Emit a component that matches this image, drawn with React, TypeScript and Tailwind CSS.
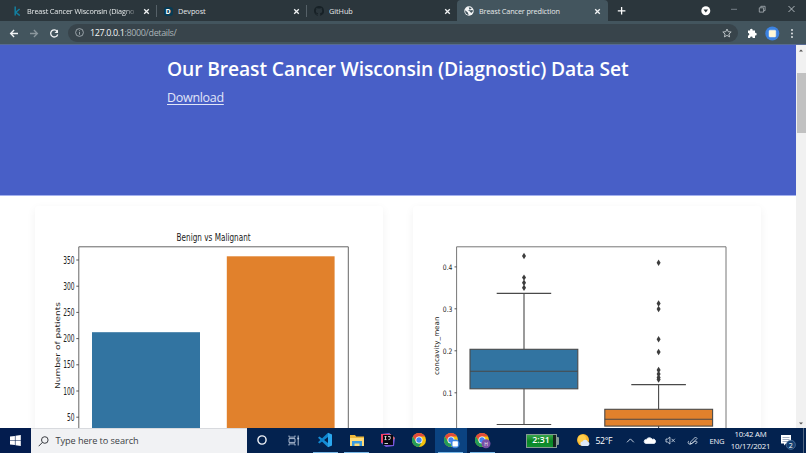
import type { ReactNode } from "react";

const ui = "font-['Open_Sans','Noto_Sans',sans-serif]";

function Close() {
  return (
    <svg width="7" height="7" viewBox="0 0 7 7" className="shrink-0">
      <path d="M1.2 1.2 5.8 5.8M5.8 1.2 1.2 5.8" stroke="#f1f3f4" strokeWidth="1.3" />
    </svg>
  );
}

function Tab({ icon, title, width, titleClass = "" }: { icon: ReactNode; title: string; width: string; titleClass?: string }) {
  return (
    <div className={`flex h-[22px] shrink-0 items-center ${width}`}>
      <div className="flex w-[10px] shrink-0 justify-center">{icon}</div>
      <span className={`ml-[5px] grow overflow-hidden whitespace-nowrap text-[7.3px] leading-[12px] text-[#e6eaeb] ${titleClass}`}>{title}</span>
      <Close />
    </div>
  );
}

function TabStrip() {
  return (
    <div className="flex h-[21px] bg-[#2b363c]">
      <Tab
        width="w-[150px] pl-[12px]"
        title="Breast Cancer Wisconsin (Diagno"
        titleClass="mr-[4px] tracking-[-0.14px] [mask-image:linear-gradient(to_right,black_86%,transparent)]"
        icon={
          <svg width="7" height="10" viewBox="0 0 7 10">
            <path d="M1.2.5v9M5.6 3 1.8 6.3 5.8 9.5" stroke="#137f9f" strokeWidth="1.5" fill="none" />
          </svg>
        }
      />
      <div className="ml-[6px] mt-[5px] h-[12px] w-px bg-[#566168]" />
      <Tab
        width="w-[143px] pl-[6px]"
        title="Devpost"
        titleClass="tracking-[-0.05px]"
        icon={
          <div className="flex size-[9px] items-center justify-center rounded-[3px] bg-[#063b54] text-[7px] font-bold leading-none text-white">D</div>
        }
      />
      <div className="ml-[6px] mt-[5px] h-[12px] w-px bg-[#566168]" />
      <Tab
        width="w-[144px] pl-[7px]"
        title="GitHub"
        titleClass="tracking-[-0.05px]"
        icon={
          <svg width="10" height="10" viewBox="0 0 16 16" fill="#172126">
            <path d="M8 0C3.58 0 0 3.58 0 8c0 3.54 2.29 6.53 5.47 7.59.4.07.55-.17.55-.38v-1.49c-2.01.37-2.53-.49-2.69-.94-.09-.23-.48-.94-.82-1.13-.28-.15-.68-.52-.01-.53.63-.01 1.08.58 1.23.82.72 1.21 1.87.87 2.33.66.07-.52.28-.87.51-1.07-1.78-.2-3.64-.89-3.64-3.95 0-.87.31-1.59.82-2.15-.08-.2-.36-1.02.08-2.12 0 0 .67-.21 2.2.82a7.6 7.6 0 0 1 4 0c1.53-1.04 2.2-.82 2.2-.82.44 1.1.16 1.92.08 2.12.51.56.82 1.27.82 2.15 0 3.07-1.87 3.75-3.65 3.95.29.25.54.73.54 1.48v2.2c0 .21.15.46.55.38A8 8 0 0 0 8 0" />
          </svg>
        }
      />
      <div className="ml-[6px] h-full rounded-t-[4px] bg-[#43555e]">
        <Tab
          width="w-[151px] pl-[7px] pr-[7px]"
          title="Breast Cancer prediction"
          titleClass="tracking-[-0.14px]"
          icon={
            <svg width="10" height="10" viewBox="0 0 10 10">
              <circle cx="5" cy="5" r="4.7" fill="#f4f6f7" />
              <path d="M1.2 4.3 3.8 6.5 4.7 9C2.2 8.8.8 6.9 1.2 4.3ZM4.8 1.3 7.8 2 6.7 3.3 5.4 3.2 4.8 4.4 3.6 4.6 5.7 5.3 7.2 7 8.8 5.4 8.7 4 6.7 4.3 5.6 4.5" fill="#43555e" />
            </svg>
          }
        />
      </div>
      <svg width="198" height="21" viewBox="608 0 198 21" fill="none" className="shrink-0">
        <path d="M617.8 10.8h7.6M621.6 7v7.6" stroke="#fff" strokeWidth="1.3" />
        <circle cx="705.8" cy="10.7" r="4.5" fill="#fff" />
        <path d="m703.5 9.5 2.3 3 2.3-3Z" fill="#2b363c" />
        <path d="M731 9.3h6" stroke="#89939a" strokeWidth=".8" />
        <path d="M759.3 7.8h4.3v4.3h-4.3ZM760.8 7.5V6.3h4.3v4.3h-1.2" stroke="#abb3b8" strokeWidth=".8" />
        <path d="m788.5 6 6 6m0-6-6 6" stroke="#bbc3c7" strokeWidth=".9" />
      </svg>
    </div>
  );
}

function Toolbar() {
  return (
    <div className="flex h-[24px] items-center border-b border-[#576a94] bg-[#43555e]">
      <svg width="68" height="22" viewBox="0 0 68 22" fill="none" strokeWidth="1.3">
        <path d="M18 11.5h-7.4M14.1 8l-3.5 3.5 3.5 3.5" stroke="#f2f4f5" />
        <path d="M30 11.5h7.4M33.9 8l3.5 3.5-3.5 3.5" stroke="#8b979d" />
        <path d="M57.2 9.3A3.6 3.6 0 1 0 57.7 12.5" stroke="#f2f4f5" />
        <path d="M58 7.5v3.5h-3.5Z" fill="#f2f4f5" />
      </svg>
      <div className="flex h-[18px] w-[670px] items-center rounded-full bg-[#38444b] pl-[7px] pr-[6px]">
        <svg width="9" height="9" viewBox="0 0 9 9" fill="none" stroke="#b3bbc0" strokeWidth=".8">
          <circle cx="4.5" cy="4.5" r="3.9" />
          <path d="M4.5 4v2.7M4.5 2.3v.9" />
        </svg>
        <span className="ml-[6px] grow text-[9px] leading-[14px] tracking-[-0.38px] text-[#a9b3b8]"><span className="text-[#f5f7f8]">127.0.0.1</span>:8000/details/</span>
        <svg width="10" height="10" viewBox="0 0 10 10" fill="none" stroke="#c5cccf" strokeWidth=".9">
          <path d="m5 1 1.2 2.7 3 .3-2.3 2 .7 2.9L5 7.4 2.4 8.9l.7-2.9L.8 4l3-.3Z" />
        </svg>
      </div>
      <svg width="68" height="22" viewBox="738 21.5 68 22">
        <path d="M748 30h2.1a1.3 1.3 0 1 1 2.5 0h2.4v2.4a1.3 1.3 0 1 1 0 2.5v2.5h-2.3a1.3 1.3 0 1 0-2.6 0H748v-2.3a1.3 1.3 0 1 0 0-2.6Z" fill="#fff" />
        <circle cx="772.3" cy="33" r="7" fill="#3c82e0" />
        <rect x="769" y="29.7" width="6.8" height="6.8" rx="1" fill="#fff8d6" stroke="#e8eef0" strokeWidth=".5" />
        <g fill="#eef1f2"><circle cx="792" cy="29.5" r=".9" /><circle cx="792" cy="33" r=".9" /><circle cx="792" cy="36.5" r=".9" /></g>
      </svg>
    </div>
  );
}

const bars = [
  [350, 260], [300, 286.2], [250, 312.4], [200, 338.6], [150, 364.8], [100, 391], [50, 417.2],
];
const ticks: [string, number][] = [["0.4", 266.9], ["0.3", 308.8], ["0.2", 350.8], ["0.1", 392.8]];
const outliers: [number, number][] = [
  [524, 256], [524, 277.6], [524, 282.7], [524, 287.7],
  [658.6, 262.7], [658.6, 303.5], [658.6, 309], [658.6, 339.3], [658.6, 352], [658.6, 370], [658.6, 374], [658.6, 377.5], [658.6, 379.5],
];
const chartFont = "font-['DejaVu_Sans',sans-serif]";

function BarChart() {
  return (
    <svg width="348" height="222" viewBox="35 206 348 222" className={chartFont}>
      <rect x="92" y="332.2" width="108" height="100" fill="#3274a1" />
      <rect x="226.8" y="256.3" width="107.8" height="180" fill="#e1812c" />
      <path d="M78.8 430V246.8H348.3V430" fill="none" stroke="#666" strokeWidth="1" />
      <text x="176.6" y="241.4" fontSize="11" fill="#1a1a1a" textLength="74" lengthAdjust="spacingAndGlyphs">Benign vs Malignant</text>
      {bars.map(([v, y]) => (
        <g key={v}>
          <path d={`M76.3 ${y}h2.5`} stroke="#444" strokeWidth=".9" />
          <text x={v >= 100 ? 63.2 : 66.9} y={y + 3.5} fontSize="9.6" fill="#222" textLength={v >= 100 ? 11.4 : 7.6} lengthAdjust="spacingAndGlyphs">{v}</text>
        </g>
      ))}
      <text transform="translate(59.8 389) rotate(-90)" fontSize="6.8" fill="#222" textLength="87" lengthAdjust="spacingAndGlyphs">Number of patients</text>
    </svg>
  );
}

function BoxPlot() {
  return (
    <svg width="348" height="222" viewBox="413 206 348 222" className={chartFont}>
      <path d="M456.6 430V246.8H726V430" fill="none" stroke="#777" strokeWidth="1" />
      {ticks.map(([label, y]) => (
        <g key={label}>
          <path d={`M454.5 ${y}h2.1`} stroke="#444" strokeWidth=".9" />
          <text x="442.8" y={y + 2.7} fontSize="7.5" fill="#222" textLength="9.6" lengthAdjust="spacingAndGlyphs">{label}</text>
        </g>
      ))}
      <text transform="translate(438.9 375) rotate(-90)" fontSize="6.7" fill="#222" textLength="58.5" lengthAdjust="spacingAndGlyphs">concavity_mean</text>
      <g stroke="#494949" strokeWidth="1.1" fill="none">
        <path d="M524 293.4V349.3M524 389V424.5M496.7 293.4h54.5M496.7 424.5h54.5M658.6 384.6V409.3M658.6 426V430M631.3 384.6h54.6" />
        <rect x="470" y="349.3" width="107.8" height="39.5" fill="#3274a1" />
        <path d="M470 371.2h107.8" />
        <rect x="604.8" y="409.3" width="107.8" height="16.8" fill="#e1812c" />
        <path d="M604.8 419.2h107.8" />
      </g>
      {outliers.map(([x, y]) => (
        <path key={`${x}-${y}`} d={`M${x} ${y - 3.2}l2 3.2-2 3.2-2-3.2Z`} fill="#3d3d3d" />
      ))}
    </svg>
  );
}

function Page() {
  return (
    <div className="flex h-[383px] bg-white">
      <main className="flex h-full w-[796px] flex-col overflow-hidden">
        <section className="h-[151px] shrink-0 border-b border-[#a4b1ee] bg-[#485fc7] pl-[167px] pt-[10px]">
          <h1 className="whitespace-nowrap text-[19.3px] font-semibold leading-[28px] tracking-[-0.12px] text-white">Our Breast Cancer Wisconsin (Diagnostic) Data Set</h1>
          <a className="mt-[5px] block w-max text-[12.5px] leading-[19px] tracking-[-0.3px] text-[#e1e6f8] underline underline-offset-2">Download</a>
        </section>
        <section className="flex gap-[30px] pl-[35px] pt-[10px]">
          <div className="h-[260px] w-[348px] shrink-0 rounded-[3px] bg-white shadow-[0_3px_10px_rgba(10,10,10,0.06)]"><BarChart /></div>
          <div className="h-[260px] w-[348px] shrink-0 rounded-[3px] bg-white shadow-[0_3px_10px_rgba(10,10,10,0.06)]"><BoxPlot /></div>
        </section>
      </main>
      <div className="flex w-[10px] flex-col items-center justify-between bg-[#f1f1f1] pb-[3px] pt-[4px]">
        <svg width="4" height="3" viewBox="0 0 4 3"><path d="m0 2.5 2-2 2 2Z" fill="#505050" /></svg>
        <div className="mb-auto mt-[21px] h-[60px] w-[9px] bg-[#c1c1c1]" />
        <svg width="4" height="3" viewBox="0 0 4 3"><path d="m0 .5 2 2 2-2Z" fill="#505050" /></svg>
      </div>
    </div>
  );
}

function Chrome({ badge }: { badge?: ReactNode }) {
  return (
    <svg width="18" height="18" viewBox="0 0 18 18">
      <circle cx="9" cy="9" r="7" fill="#f4c20d" />
      <path d="M2.9 5.5A7 7 0 0 1 15.1 5.5H9A3.5 3.5 0 0 0 6 10.8Z" fill="#e24a3b" />
      <path d="M2.9 5.5 6 10.8A3.5 3.5 0 0 0 12 10.8L9 16A7 7 0 0 1 2.9 5.5Z" fill="#239d58" />
      <circle cx="9" cy="9" r="3.5" fill="#fff" />
      <circle cx="9" cy="9" r="2.7" fill="#4285f4" />
      {badge}
    </svg>
  );
}

function Slot({ children, className = "", line = false }: { children: ReactNode; className?: string; line?: boolean }) {
  return (
    <div className={`flex h-full w-[31.45px] shrink-0 flex-col items-center ${className}`}>
      <div className="flex h-[24px] items-center">{children}</div>
      {line && <div className="h-px w-[25px] bg-[#78b8e8]" />}
    </div>
  );
}

function Taskbar() {
  return (
    <div className="flex h-[25px] items-center bg-[#03224f]">
      <div className="flex h-full w-[30.5px] items-center justify-center bg-[#031c4e]">
        <svg width="11" height="11" viewBox="0 0 11 11" fill="#fff">
          <path d="m0 1.6 4.9-.7v4.3H0ZM5.5.8 10.8 0v5.2H5.5ZM0 5.8h4.9v4.3L0 9.4ZM5.5 5.8h5.3V11l-5.3-.8Z" />
        </svg>
      </div>
      <div className="flex h-full w-[216px] items-center border-t border-[#d8dade] bg-[#f1f2f4] pl-[7px]">
        <svg width="11" height="11" viewBox="0 0 11 11" fill="none" stroke="#3a3d42" strokeWidth="1">
          <circle cx="6.8" cy="4" r="3.3" /><path d="M4.4 6.4.7 10.2" />
        </svg>
        <span className="ml-[7px] text-[9.2px] leading-[14px] tracking-[-0.08px] text-[#3c3f44]">Type here to search</span>
      </div>
      <Slot><svg width="10" height="10" viewBox="0 0 10 10"><circle cx="5" cy="5" r="4.1" fill="none" stroke="#f0f3f8" strokeWidth="1.4" /></svg></Slot>
      <Slot>
        <svg width="12" height="11" viewBox="0 0 12 11" fill="none" stroke="#bcc9dc" strokeWidth=".9">
          <path d="M1 .5v1.6h6V.5M1 10.5V8.9h6v1.6M1 3.6h6v3.8H1ZM10.2.5v10" /><path d="M9.3 3.5h1.8" strokeWidth="1.6" />
        </svg>
      </Slot>
      <Slot line>
        <svg width="16" height="16" viewBox="0 0 16 16">
          <path d="M1 5.7 2.5 4.4 11 11v4.2Z" fill="#168dd6" />
          <path d="M11 .8 15 2.5v11l-4 1.7Z" fill="#2ba8ee" />
          <path d="m1 10.3 10-9.5V5L2.5 11.6Z" fill="#0f86cf" />
        </svg>
      </Slot>
      <Slot line>
        <svg width="14" height="13" viewBox="0 0 14 13">
          <path d="M0 1h5l1.2 1.5H14V12H0Z" fill="#f0b93b" /><path d="M0 4h14v8H0Z" fill="#ffdc78" />
          <path d="M2 7h10v5H9.5V9.5h-5V12H2Z" fill="#3a9be0" />
        </svg>
      </Slot>
      <Slot>
        <svg width="14" height="14" viewBox="0 0 14 14">
          <path d="M0 1 8 0l6 5-1 8-8 1L0 10Z" fill="#7556d6" /><path d="M0 1h8L3 9 0 10Z" fill="#f23e65" /><path d="m8 0 6 5-3 3Z" fill="#db6b68" />
          <rect x="2" y="2" width="10" height="10" fill="#080810" />
          <path d="M3.5 3.6h2M4.5 3.6v3M3.5 6.6h2M7 3.6h2.2v2.2q0 .9-1.8.8" stroke="#fff" strokeWidth=".8" fill="none" /><path d="M3.5 10.5h3.5" stroke="#fff" strokeWidth=".8" />
        </svg>
      </Slot>
      <Slot><Chrome /></Slot>
      <Slot className="bg-[#0b4381]" line>
        <Chrome badge={<g><circle cx="13.2" cy="12.8" r="4.4" fill="#3b83df" /><rect x="10.5" y="10.2" width="5.4" height="5.2" rx=".7" fill="#fff" /></g>} />
      </Slot>
      <Slot line>
        <Chrome badge={<g><circle cx="13" cy="12.8" r="4.5" fill="#7950a5" /><text x="11.3" y="14.6" fontSize="5" fill="#eee">H</text></g>} />
      </Slot>
      <div className="ml-[28px] flex h-[14px] w-[31px] shrink-0 items-center justify-center border border-[#859a93] bg-linear-to-b from-[#36a64b] via-[#078625] to-[#118f31] pr-[1px] text-[8.8px] font-semibold leading-none text-white shadow-[inset_-3px_0_0_#17251e]">2:31</div>
      <div className="h-[8px] w-[2px] rounded-r-[1px] bg-[#859a93]" />
      <svg width="15" height="15" viewBox="0 0 15 15" className="ml-[17px] shrink-0">
        <circle cx="7" cy="7" r="6" fill="#f9b82e" /><circle cx="6" cy="6" r="4" fill="#ffce4b" />
        <path d="M6 13a2.3 2.3 0 0 1 .4-4.5 3 3 0 0 1 5.5.3A2.2 2.2 0 0 1 12 13Z" fill="#dce8f7" />
      </svg>
      <span className="ml-[4.5px] w-[18px] whitespace-nowrap text-[8.7px] leading-[12px] tracking-[-0.35px] text-white">52°F</span>
      <svg width="86" height="20" viewBox="618 431 86 20" fill="none" stroke="#dce4ef" strokeWidth=".9" className="ml-[4.5px] shrink-0">
        <path d="m627 442.3 3.4-3.4 3.4 3.4" />
        <path d="M646 443.5a2 2 0 0 1 .3-4 3.5 3.5 0 0 1 6-.2 2.1 2.1 0 0 1 2 4.2Z" fill="#fff" />
        <path d="M666 439h1.6l2.3-2v7l-2.3-2H666ZM671.5 438.8l3.3 3.3m0-3.3-3.3 3.3" strokeWidth=".8" />
        <path d="m690.5 442 5-5 1.5 1.5-5 5-2 .5ZM689 441c-1.7.8-.8 3.7 1.2 3.1 2.8-.8 4-3 5.8-3 1.7.2 1 3-.8 2.5" strokeWidth=".8" />
      </svg>
      <span className="ml-[5.5px] w-[18px] text-[7.6px] leading-[12px] tracking-[-0.2px] text-[#f2f5f9]">ENG</span>
      <div className="ml-[1px] w-[44px] whitespace-nowrap text-center text-[7.8px] leading-[11.5px] tracking-[-0.2px] text-[#f2f5f9]">
        <div>10:42 AM</div>
        <div>10/17/2021</div>
      </div>
      <svg width="20" height="18" viewBox="776 432 20 18" className="ml-[4px] shrink-0">
        <path d="M780 435h10v8.5h-5l-2 2v-2h-3Z" fill="#fff" /><path d="M781.5 437.5h7M781.5 439.5h7M781.5 441.5h5" stroke="#647997" strokeWidth=".6" />
        <circle cx="789.8" cy="444.8" r="4.6" fill="#153f71" stroke="#7596bc" strokeWidth=".5" />
        <text x="787.8" y="447.5" fontSize="7" fill="#fff">2</text>
      </svg>
      <div className="ml-auto mr-[2px] h-full w-px shrink-0 bg-[#526783]" />
    </div>
  );
}

export default function App() {
  return (
    <div className={`h-[453px] w-[806px] overflow-hidden bg-white ${ui}`}>
      <TabStrip />
      <Toolbar />
      <Page />
      <Taskbar />
    </div>
  );
}
